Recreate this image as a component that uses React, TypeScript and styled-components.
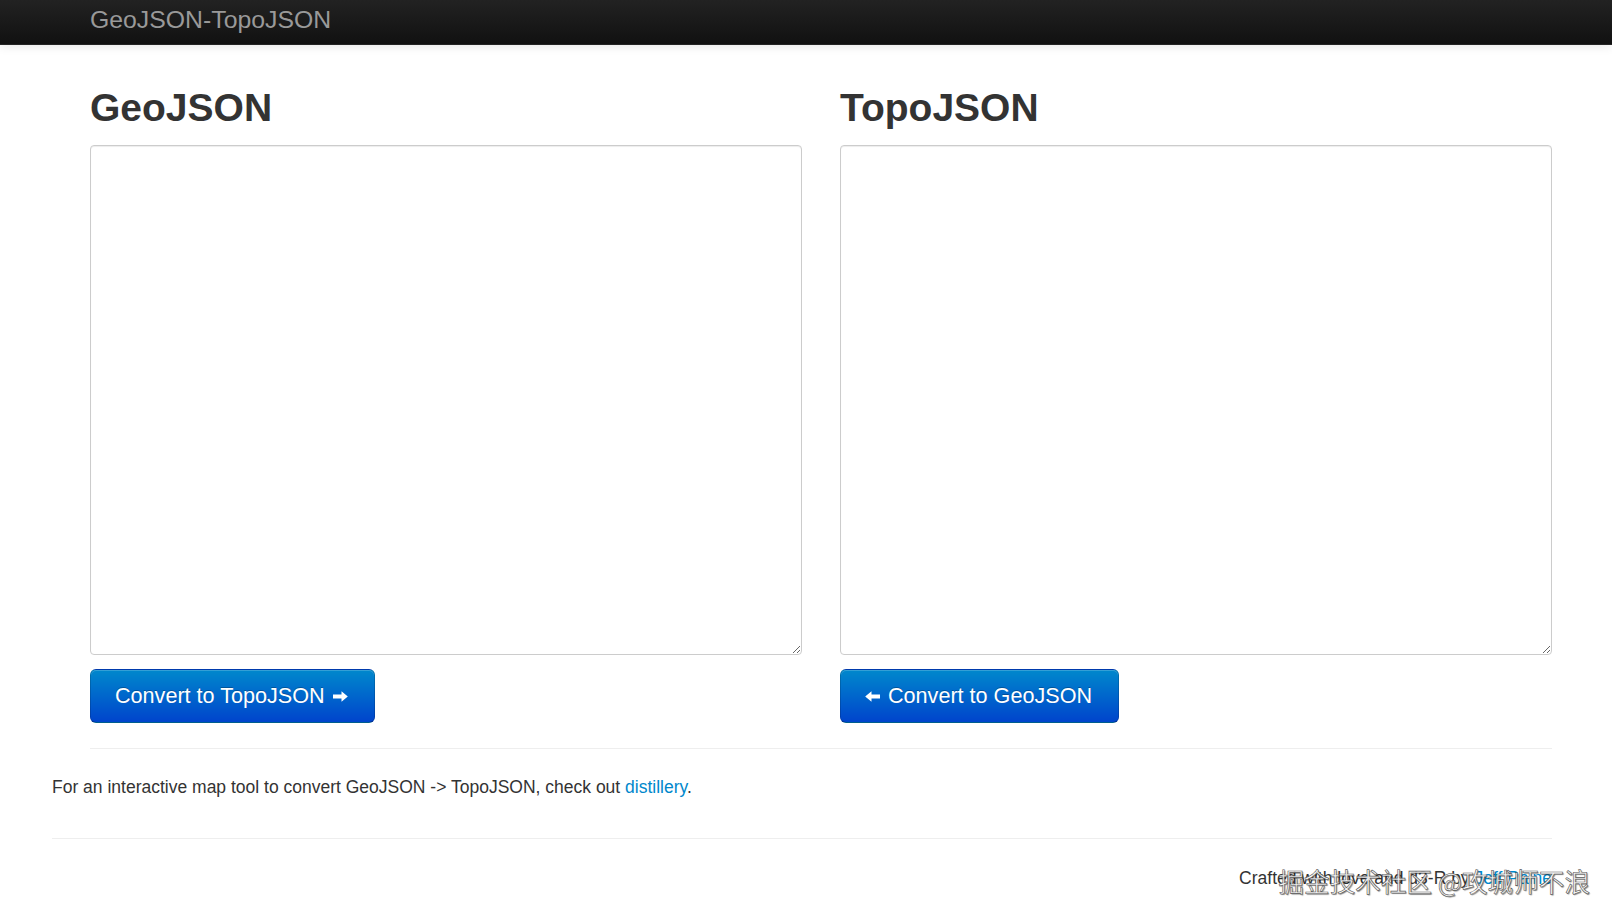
import React from "react";
import { styled, createGlobalStyle } from "styled-components";

const GlobalStyle = createGlobalStyle`
  html, body {
    margin: 0;
    padding: 0;
    background: #fff;
    font-family: "Liberation Sans", Arial, sans-serif;
    color: #333;
  }
`;

// navbar
const Navbar = styled.header`
  height: 44px;
  background: linear-gradient(to bottom, #222222, #111111);
  border-bottom: 1px solid #252525;
  box-shadow: 0 1px 10px rgba(0, 0, 0, 0.1);
  display: flex;
  align-items: center;
  padding-left: 90px;
`;
const Brand = styled.a`
  font-size: 24.8px;
  color: #999;
  text-decoration: none;
  line-height: 38px;
  margin-top: -5px;
`;

// page
const Page = styled.main`
  padding: 43px 60px 0 52px;
`;
const Row = styled.div`
  margin-left: 38px;
`;
const Columns = styled.div`
  display: grid;
  grid-template-columns: 1fr 1fr;
  column-gap: 38px;
`;
const Column = styled.section`
  display: flex;
  flex-direction: column;
  align-items: flex-start;
`;
const Title = styled.h1`
  margin: 0 0 17px;
  font-size: 39px;
  line-height: 40px;
  font-weight: bold;
  color: #333;
`;
const Editor = styled.textarea`
  box-sizing: border-box;
  width: 100%;
  height: 510px;
  margin: 0 0 14px;
  border: 1px solid #ccc;
  border-radius: 4px;
  box-shadow: inset 0 1px 1px rgba(0, 0, 0, 0.075);
  font-family: "Liberation Mono", monospace;
  font-size: 14px;
  padding: 6px;
`;
const Button = styled.button`
  height: 54px;
  padding: 0 26px 0 24px;
  display: flex;
  align-items: center;
  gap: 8px;
  font-family: "Liberation Sans", Arial, sans-serif;
  font-size: 21.6px;
  color: #fff;
  text-shadow: 0 -1px 0 rgba(0, 0, 0, 0.25);
  background: linear-gradient(to bottom, #0088cc, #0044cc);
  border: 1px solid rgba(0, 0, 0, 0.15);
  border-bottom-color: rgba(0, 0, 0, 0.3);
  border-radius: 6px;
  box-shadow: inset 0 1px 0 rgba(255, 255, 255, 0.2);
  cursor: pointer;
`;
const Rule = styled.hr<{ $top?: number }>`
  margin: ${(p) => p.$top ?? 0}px 0 0;
  border: 0;
  border-top: 1px solid #eee;
`;
const Note = styled.p`
  margin: 26px 0 38px;
  font-size: 17.5px;
  line-height: 25px;
`;
const Link = styled.a`
  color: #0088cc;
  text-decoration: none;
`;
const Footer = styled.footer`
  position: relative;
  display: flex;
  justify-content: flex-end;
  padding-top: 27px;
  font-size: 17.5px;
  line-height: 25px;
  height: 60px;
`;
const Watermark = styled.span`
  position: absolute;
  right: -38px;
  top: 27px;
  font-family: "Noto Sans CJK SC", sans-serif;
  font-size: 25.6px;
  line-height: 30px;
  color: rgba(255, 255, 255, 0.9);
  -webkit-text-stroke: 0.6px #555;
  text-shadow: 1px 1px 1px rgba(0, 0, 0, 0.45);
  white-space: nowrap;
`;

function Arrow({ dir }: { dir: "left" | "right" }) {
  return (
    <svg
      width="15"
      height="11"
      viewBox="0 0 15 11"
      style={{ transform: dir === "left" ? "scaleX(-1)" : undefined }}
    >
      <path d="M0 3.6h8.5V0.3L14.8 5.5 8.5 10.7V7.4H0z" fill="#fff" />
    </svg>
  );
}

export default function App() {
  return (
    <>
      <GlobalStyle />
      <Navbar>
        <Brand href="#">GeoJSON-TopoJSON</Brand>
      </Navbar>
      <Page>
        <Row>
          <Columns>
            <Column>
              <Title>GeoJSON</Title>
              <Editor />
              <Button>
                Convert to TopoJSON <Arrow dir="right" />
              </Button>
            </Column>
            <Column>
              <Title>TopoJSON</Title>
              <Editor />
              <Button>
                <Arrow dir="left" /> Convert to GeoJSON
              </Button>
            </Column>
          </Columns>
          <Rule $top={25} />
        </Row>
        <Note>
          For an interactive map tool to convert GeoJSON -&gt; TopoJSON, check out{" "}
          <Link href="#">distillery</Link>.
        </Note>
        <Rule />
        <Footer>
          <span>
            Crafted with love and d3-R by <Link href="#">Jeff Paine</Link>
          </span>
          <Watermark>掘金技术社区 @攻城师不浪</Watermark>
        </Footer>
      </Page>
    </>
  );
}
